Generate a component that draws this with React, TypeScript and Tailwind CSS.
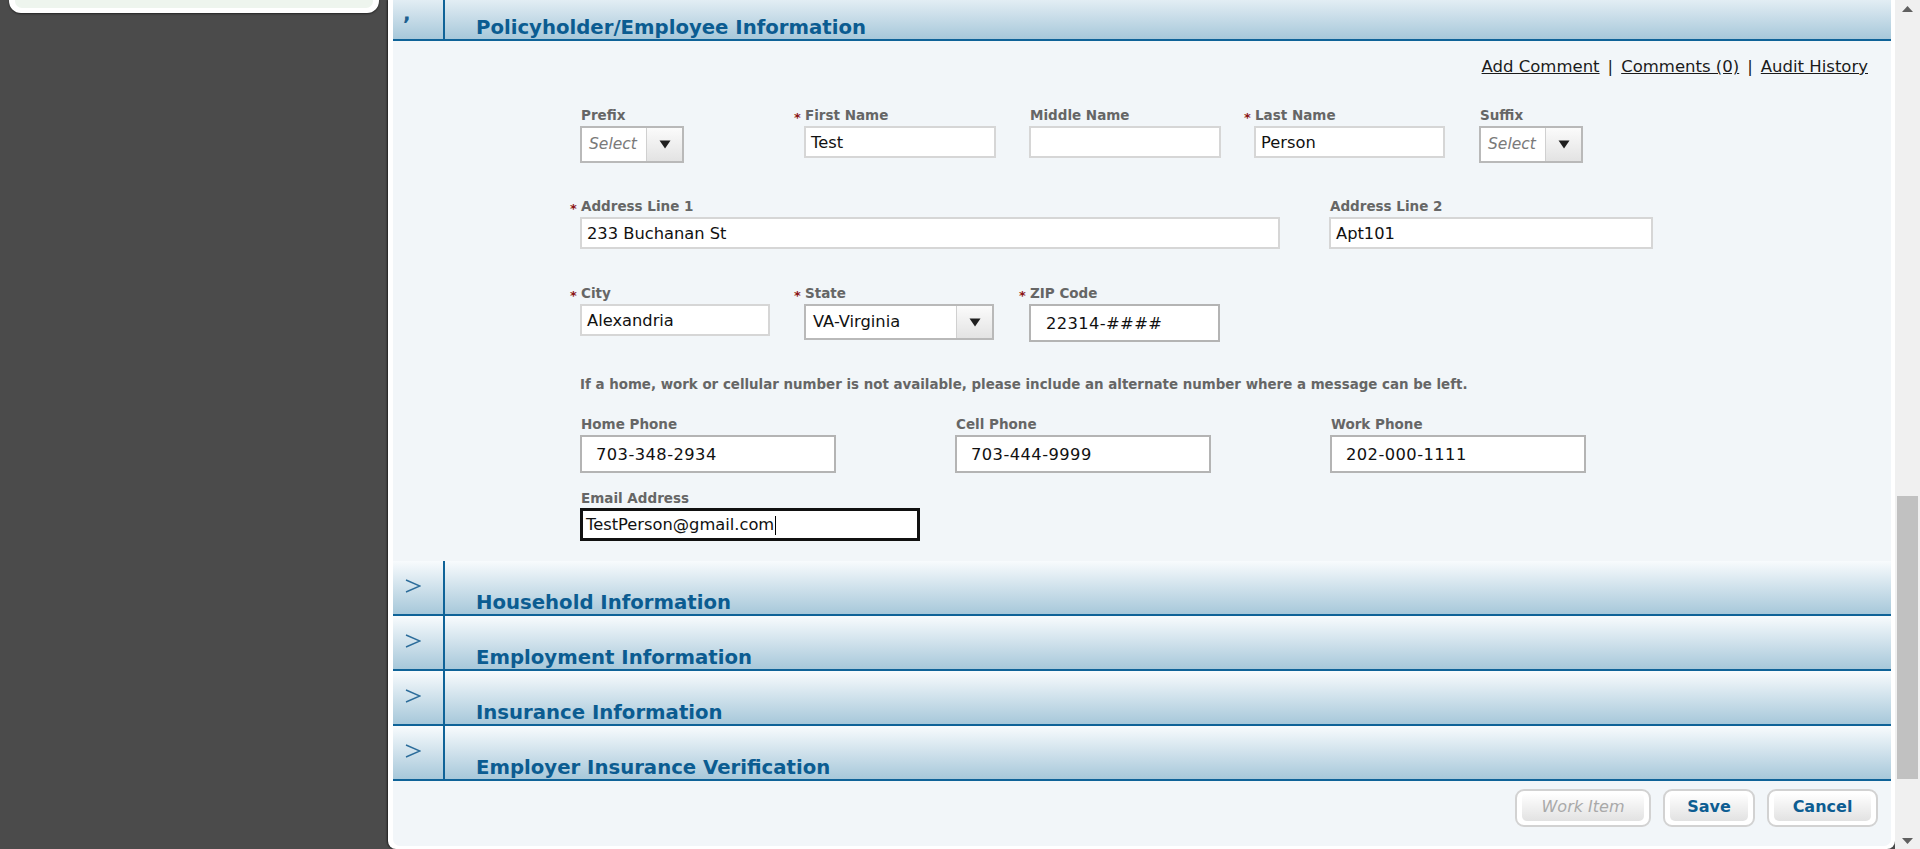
import React from 'react';

const collapsed = [
  'Household Information',
  'Employment Information',
  'Insurance Information',
  'Employer Insurance Verification',
];

function Arrow() {
  return (
    <svg width="16" height="14" viewBox="0 0 16 14" fill="none">
      <path d="M1 1 L15 7 L1 13" stroke="#2b6c9a" strokeWidth="1.4" />
    </svg>
  );
}

function SectionHeader({ title, open }: { title: string; open?: boolean }) {
  return (
    <div
      className={`flex h-[55px] shrink-0 border-b-2 border-[#0f6398] bg-linear-to-b from-[#f8fbfd] to-[#a7c8da] ${open ? '-mt-[14px]' : ''}`}
    >
      {open ? (
        <div className="w-[50px] shrink-0 pl-[10px] pt-[17px] text-[20px] leading-[20px] font-bold text-[#1d5f8f]">,</div>
      ) : (
        <div className="w-[50px] shrink-0 pl-[12px] pt-[18px]">
          <Arrow />
        </div>
      )}
      <div className="w-[2px] shrink-0 bg-[#0f6398]" />
      <div className="flex items-end pl-[31px] text-[19.7px] leading-[22px] font-bold text-[#0b5c91]">{title}</div>
    </div>
  );
}

function Label({ text, req }: { text: string; req?: boolean }) {
  return (
    <div
      className={`flex h-[16px] items-start text-[13.5px] leading-[16px] font-bold whitespace-nowrap text-[#666666] ${req ? '-ml-[10px]' : 'pl-[1px]'}`}
    >
      {req && <span className="inline-block w-[11px] translate-y-[3px] text-[13px] leading-[16px] text-[#8b1414]">*</span>}
      {text}
    </div>
  );
}

function Caret() {
  return (
    <svg width="12" height="9" viewBox="0 0 12 9">
      <path d="M0.5 0.5 H11.5 L6 8.5 Z" fill="#1f1f1f" />
    </svg>
  );
}

function Select({ text, placeholder, className }: { text: string; placeholder?: boolean; className: string }) {
  return (
    <div className={`flex border-2 border-[#b9b9b9] bg-white ${className}`}>
      <div
        className={`flex flex-1 items-center pt-[1px] pl-[7px] whitespace-nowrap ${placeholder ? 'text-[15.5px] text-[#7a7a7a] italic' : 'text-[16.3px] text-[#111]'}`}
      >
        {text}
      </div>
      <div className="flex w-[36px] items-center justify-center border-l border-[#d0d0d0] bg-linear-to-b from-[#fbfbfb] to-[#e3e3e3]">
        <Caret />
      </div>
    </div>
  );
}

function Btn({ label, className, disabled }: { label: string; className: string; disabled?: boolean }) {
  return (
    <div className={`h-[38px] rounded-[9px] border-2 border-[#d2d2d2] bg-white px-[5px] pt-[2px] pb-[4px] ${className}`}>
      <div
        className={`flex h-full items-center justify-center rounded-[5px] bg-linear-to-b from-[#ffffff] to-[#e2e2e2] text-[16px] ${disabled ? 'text-[#a9a9a9] italic' : 'font-bold text-[#0d5d92]'}`}
      >
        {label}
      </div>
    </div>
  );
}

export default function App() {
  return (
    <div className="flex h-[849px] w-[1920px] overflow-hidden bg-[#4b4b4b] font-['DejaVu_Sans',sans-serif]">
      {/* left rail */}
      <aside className="w-[388px] shrink-0">
        <div className="ml-[9px] h-[13px] w-[370px] rounded-b-[12px] bg-white px-[6px] pb-[5px] shadow-[0_1px_2px_rgba(0,0,0,0.5)]">
          <div className="h-full rounded-b-[7px] bg-[#eef5ee]" />
        </div>
      </aside>

      {/* main panel */}
      <main className="flex w-[1507px] shrink-0 flex-col rounded-b-[8px] bg-white pr-[4px] pb-[3px] pl-[5px] shadow-[-1px_0_2px_rgba(0,0,0,0.6)]">
        <div className="flex flex-1 flex-col overflow-hidden rounded-b-[7px] bg-[#f2f6f9]">
          <SectionHeader open title="Policyholder/Employee Information" />

          <section className="shrink-0 pt-[16px] pb-[20px]">
            <div className="flex h-[20px] justify-end pr-[23px] text-[16.5px] leading-[20px] text-[#1b1b1b]">
              <span className="underline">Add Comment</span>
              <span className="mx-[8px]">|</span>
              <span className="underline">Comments (0)</span>
              <span className="mx-[8px]">|</span>
              <span className="underline">Audit History</span>
            </div>

            <div className="pl-[187px]">
              {/* name row */}
              <div className="mt-[30px] flex items-start">
                <div className="w-[224px]">
                  <div className="mb-[3px]"><Label text="Prefix" /></div>
                  <Select text="Select" placeholder className="h-[37px] w-[104px]" />
                </div>
                <div className="w-[225px]">
                  <div className="mb-[3px]"><Label text="First Name" req /></div>
                  <div className="flex h-[32px] w-[192px] items-center border-2 border-[#d6d6d6] bg-white pt-[3px] pl-[5px] text-[16.3px] text-[#111]">Test</div>
                </div>
                <div className="w-[225px]">
                  <div className="mb-[3px]"><Label text="Middle Name" /></div>
                  <div className="h-[32px] w-[192px] border-2 border-[#d6d6d6] bg-white" />
                </div>
                <div className="w-[225px]">
                  <div className="mb-[3px]"><Label text="Last Name" req /></div>
                  <div className="flex h-[32px] w-[191px] items-center border-2 border-[#d6d6d6] bg-white pt-[3px] pl-[5px] text-[16.3px] text-[#111]">Person</div>
                </div>
                <div>
                  <div className="mb-[3px]"><Label text="Suffix" /></div>
                  <Select text="Select" placeholder className="h-[37px] w-[104px]" />
                </div>
              </div>

              {/* address row */}
              <div className="mt-[35px] flex items-start">
                <div className="w-[749px]">
                  <div className="mb-[3px]"><Label text="Address Line 1" req /></div>
                  <div className="flex h-[32px] w-[700px] items-center border-2 border-[#d6d6d6] bg-white pt-[3px] pl-[5px] text-[16.3px] text-[#111]">233 Buchanan St</div>
                </div>
                <div>
                  <div className="mb-[3px]"><Label text="Address Line 2" /></div>
                  <div className="flex h-[32px] w-[324px] items-center border-2 border-[#d6d6d6] bg-white pt-[3px] pl-[5px] text-[16.3px] text-[#111]">Apt101</div>
                </div>
              </div>

              {/* city row */}
              <div className="mt-[36px] flex items-start">
                <div className="w-[224px]">
                  <div className="mb-[3px]"><Label text="City" req /></div>
                  <div className="flex h-[32px] w-[190px] items-center border-2 border-[#d6d6d6] bg-white pt-[3px] pl-[5px] text-[16.3px] text-[#111]">Alexandria</div>
                </div>
                <div className="w-[225px]">
                  <div className="mb-[3px]"><Label text="State" req /></div>
                  <Select text="VA-Virginia" className="h-[36px] w-[190px]" />
                </div>
                <div>
                  <div className="mb-[3px]"><Label text="ZIP Code" req /></div>
                  <div className="flex h-[38px] w-[191px] items-center border-2 border-[#b4b4b4] bg-white pt-[2px] pl-[15px] text-[16.3px] tracking-[0.4px] text-[#111]">22314-####</div>
                </div>
              </div>

              <p className="mt-[35px] h-[16px] text-[13.4px] leading-[16px] font-bold whitespace-nowrap text-[#666666]">
                If a home, work or cellular number is not available, please include an alternate number where a message can be left.
              </p>

              {/* phone row */}
              <div className="mt-[23px] flex items-start">
                <div className="w-[375px]">
                  <div className="mb-[3px]"><Label text="Home Phone" /></div>
                  <div className="flex h-[38px] w-[256px] items-center border-2 border-[#b4b4b4] bg-white pt-[2px] pl-[14px] text-[16.3px] tracking-[0.45px] text-[#111]">703-348-2934</div>
                </div>
                <div className="w-[375px]">
                  <div className="mb-[3px]"><Label text="Cell Phone" /></div>
                  <div className="flex h-[38px] w-[256px] items-center border-2 border-[#b4b4b4] bg-white pt-[2px] pl-[14px] text-[16.3px] tracking-[0.45px] text-[#111]">703-444-9999</div>
                </div>
                <div>
                  <div className="mb-[3px]"><Label text="Work Phone" /></div>
                  <div className="flex h-[38px] w-[256px] items-center border-2 border-[#b4b4b4] bg-white pt-[2px] pl-[14px] text-[16.3px] tracking-[0.45px] text-[#111]">202-000-1111</div>
                </div>
              </div>

              <div className="mt-[17px]">
                <div className="mb-[2px]"><Label text="Email Address" /></div>
                <div className="flex h-[33px] w-[340px] items-center border-[3px] border-[#111] bg-white pt-[2px] pl-[3px] text-[16.3px] text-[#111]">
                  TestPerson@gmail.com
                  <span className="ml-[1px] h-[19px] w-[1px] bg-black" />
                </div>
              </div>
            </div>
          </section>

          {collapsed.map((t) => (
            <SectionHeader key={t} title={t} />
          ))}

          <div className="mt-[8px] flex shrink-0 justify-end gap-[12px] pr-[13px]">
            <Btn label="Work Item" disabled className="w-[136px]" />
            <Btn label="Save" className="w-[92px]" />
            <Btn label="Cancel" className="w-[111px]" />
          </div>
        </div>
      </main>

      {/* scrollbar */}
      <div className="flex w-[25px] shrink-0 flex-col bg-[#f0f0f0]">
        <div className="flex h-[17px] items-center justify-center">
          <svg width="11" height="6" viewBox="0 0 11 6">
            <path d="M0 6 L5.5 0 L11 6 Z" fill="#606060" />
          </svg>
        </div>
        <div className="h-[479px]" />
        <div className="mx-[2px] h-[283px] bg-[#c1c1c1]" />
        <div className="flex-1" />
        <div className="flex h-[17px] items-center justify-center">
          <svg width="11" height="6" viewBox="0 0 11 6">
            <path d="M0 0 L11 0 L5.5 6 Z" fill="#606060" />
          </svg>
        </div>
      </div>
    </div>
  );
}
